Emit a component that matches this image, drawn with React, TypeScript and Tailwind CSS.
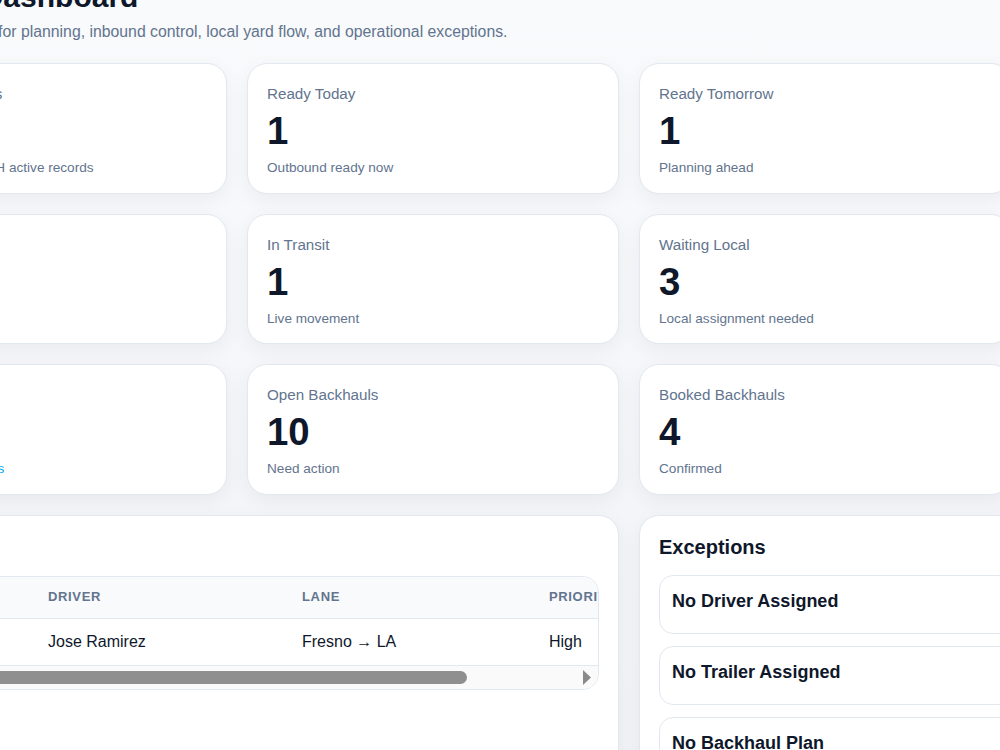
import React from "react";

const font = { fontFamily: '"Liberation Sans", Arial, sans-serif' };

type Metric = { label: string; value: string; sub: string; subClass?: string };

const metrics: Metric[] = [
  { label: "Total Active Orders", value: "14", sub: "Total from DISPATCH active records" },
  { label: "Ready Today", value: "1", sub: "Outbound ready now" },
  { label: "Ready Tomorrow", value: "1", sub: "Planning ahead" },
  { label: "Inbound", value: "2", sub: "Arriving" },
  { label: "In Transit", value: "1", sub: "Live movement" },
  { label: "Waiting Local", value: "3", sub: "Local assignment needed" },
  { label: "Alerts", value: "5", sub: "Review flagged loads", subClass: "text-sky-500" },
  { label: "Open Backhauls", value: "10", sub: "Need action" },
  { label: "Booked Backhauls", value: "4", sub: "Confirmed" },
];

function MetricCard({ m }: { m: Metric }) {
  return (
    <div className="rounded-[20px] border border-slate-200 bg-white px-[19px] pb-[16.6px] pt-[21px] shadow-[0_6px_20px_rgba(15,23,42,0.05)]">
      <div className="whitespace-nowrap text-[15.2px] leading-[17px] text-slate-500">{m.label}</div>
      <div className="mt-[10px] text-[38.4px] font-bold leading-[38px] text-slate-900">{m.value}</div>
      <div className={"mt-[10px] whitespace-nowrap text-[13.6px] leading-[16px] " + (m.subClass ?? "text-slate-500")}>
        {m.sub}
      </div>
    </div>
  );
}

const exceptions = ["No Driver Assigned", "No Trailer Assigned", "No Backhaul Plan", "Late Pickup"];

export default function App() {
  return (
    <div className="min-h-screen w-full overflow-hidden bg-gradient-to-b from-[#f9fafc] to-[#eff1f5]" style={font}>
      <div className="-ml-[145px] -mt-[21px] w-[1200px]">
        <header className="mb-[19px]">
          <h1 className="whitespace-nowrap text-3xl font-bold leading-9 text-slate-900">Network Dashboard</h1>
          <p className="mt-[5px] whitespace-nowrap text-[15.8px] leading-6 text-slate-500">
            Team control center for planning, inbound control, local yard flow, and operational exceptions.
          </p>
        </header>

        <div className="grid grid-cols-[repeat(3,372px)] gap-5">
          {metrics.map((m) => (
            <MetricCard key={m.label} m={m} />
          ))}
        </div>

        <div className="mt-5 grid grid-cols-[764px_400px] gap-5">
          <section className="rounded-[20px] border border-slate-200 bg-white px-[19px] pb-5 pt-5 shadow-[0_6px_20px_rgba(15,23,42,0.05)]">
            <h2 className="mb-4 text-xl font-bold leading-6 text-slate-900">Loads</h2>
            <div className="overflow-hidden rounded-2xl border border-slate-200">
              <table className="w-[871px] table-fixed border-collapse text-left">
                <colgroup>
                  <col className="w-[156px]" />
                  <col className="w-[254px]" />
                  <col className="w-[247px]" />
                  <col className="w-[214px]" />
                </colgroup>
                <thead>
                  <tr className="border-b border-slate-200 bg-slate-50">
                    {["Load", "Driver", "Lane", "Priority"].map((h) => (
                      <th key={h} className="px-4 pb-[13px] pt-[11px] text-[13px] font-bold uppercase leading-[17px] tracking-wider text-slate-500">
                        {h}
                      </th>
                    ))}
                  </tr>
                </thead>
                <tbody>
                  <tr className="border-b border-slate-200">
                    <td className="px-4 py-3 text-base leading-[22px] text-slate-900">LD-1042</td>
                    <td className="px-4 py-3 text-base leading-[22px] text-slate-900">Jose Ramirez</td>
                    <td className="px-4 py-3 text-base leading-[22px] text-slate-900">Fresno → LA</td>
                    <td className="px-4 py-3 text-base leading-[22px] text-slate-900">High</td>
                  </tr>
                </tbody>
              </table>
              <div className="flex h-[23px] items-center bg-[#fafafa]">
                <div className="w-[16px]" />
                <div className="h-[13px] w-[575px] rounded-full bg-[#8f8f8f]" />
                <div className="flex-1" />
                <div className="flex w-[15px] items-center">
                  <svg width="8" height="15" viewBox="0 0 8 15">
                    <polygon points="0,0 8,7.5 0,15" fill="#8a8a8a" />
                  </svg>
                </div>
              </div>
            </div>
          </section>

          <section className="rounded-[20px] border border-slate-200 bg-white px-[19px] pb-5 pt-[19px] shadow-[0_6px_20px_rgba(15,23,42,0.05)]">
            <h2 className="mb-4 text-xl font-bold leading-6 text-slate-900">Exceptions</h2>
            <div className="flex flex-col gap-3">
              {exceptions.map((e) => (
                <div key={e} className="min-h-[59px] rounded-[14px] border border-slate-200 px-3 py-[13px]">
                  <div className="text-lg font-bold leading-6 text-slate-900">{e}</div>
                </div>
              ))}
            </div>
          </section>
        </div>
        <div className="h-10" />
      </div>
    </div>
  );
}
